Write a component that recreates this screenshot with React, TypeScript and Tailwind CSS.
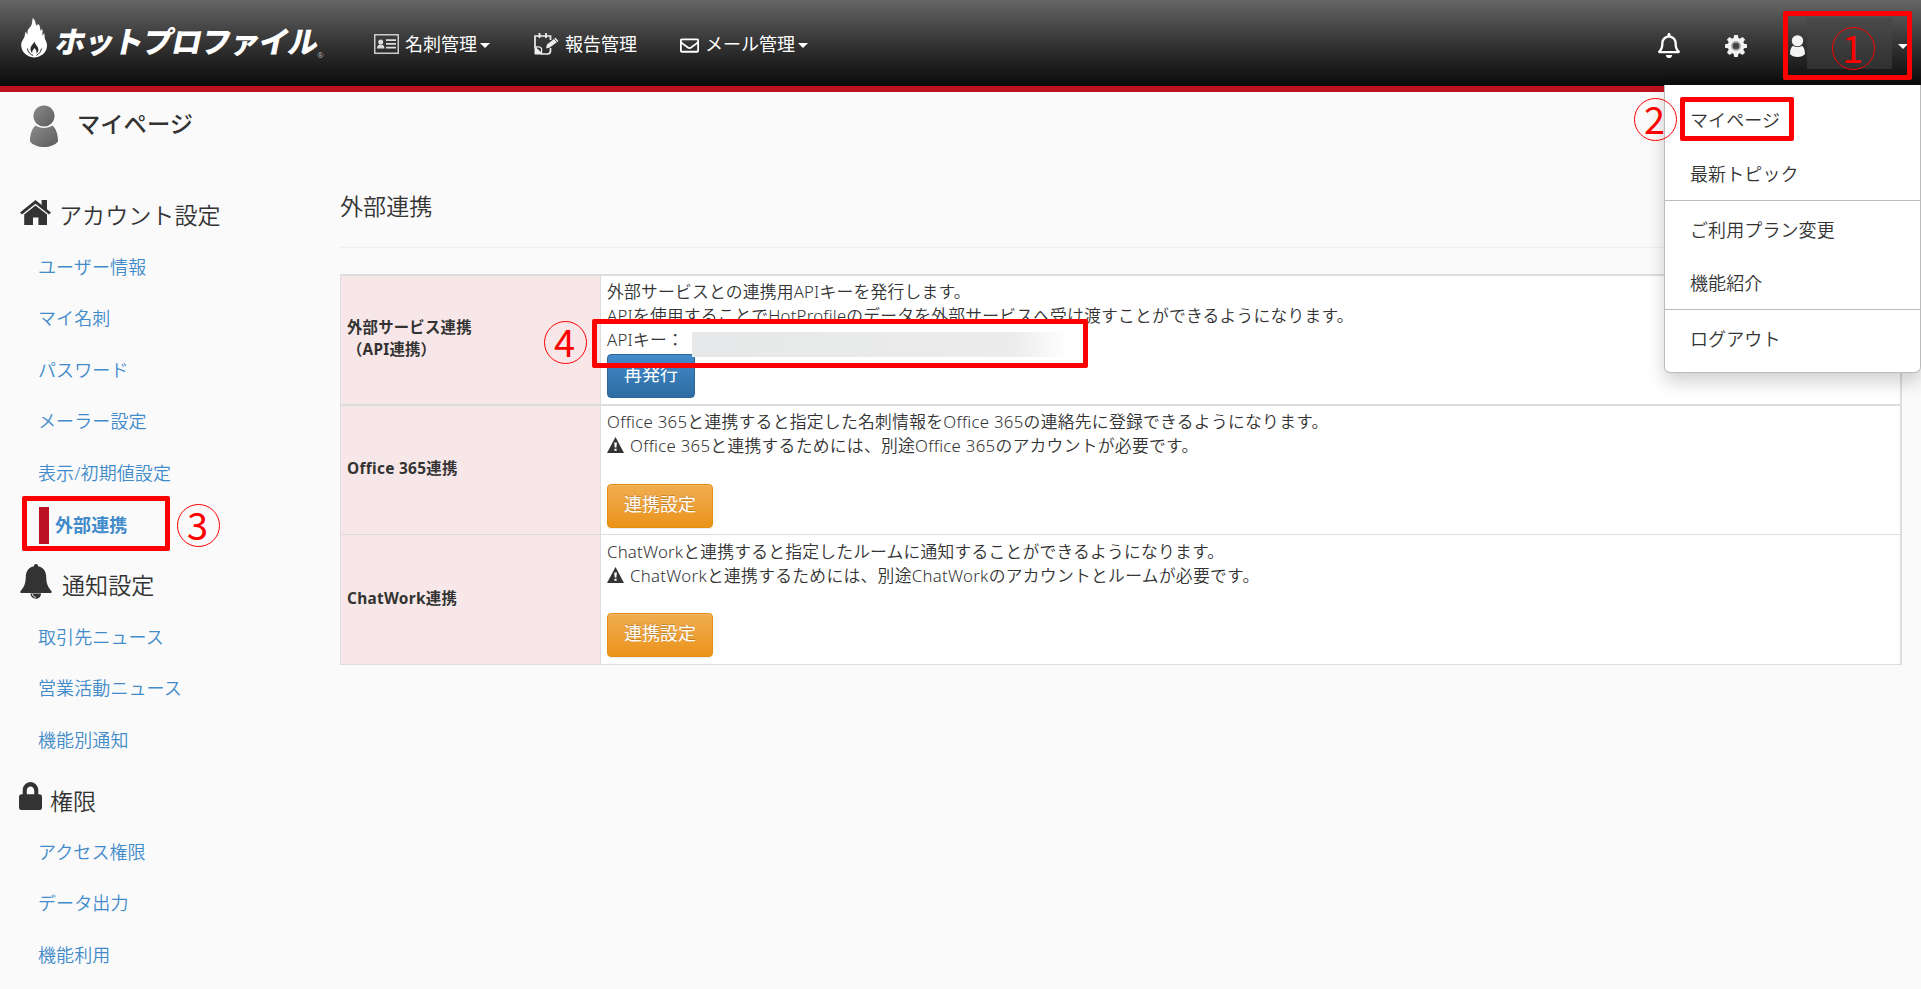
import type { ReactNode } from "react";
import { FaRegBell, FaRegEnvelope, FaLock } from "react-icons/fa";

const sections = [
  {
    title: "アカウント設定",
    icon: <HomeIcon />,
    gap: "gap-[8px]",
    items: ["ユーザー情報", "マイ名刺", "パスワード", "メーラー設定", "表示/初期値設定", "外部連携"],
  },
  {
    title: "通知設定",
    icon: <BellIcon />,
    gap: "gap-[10px]",
    items: ["取引先ニュース", "営業活動ニュース", "機能別通知"],
  },
  {
    title: "権限",
    icon: <FaLock className="-mt-[10px] -ml-[1px] h-[28px] w-[23px]" preserveAspectRatio="none" />,
    gap: "gap-[8px]",
    items: ["アクセス権限", "データ出力", "機能利用"],
  },
];

function HomeIcon() {
  return (
    <svg viewBox="0 0 31 25" className="-mt-[7px] h-[25px] w-[31px]" fill="currentColor">
      <path d="M15.500 0 0 12.400l2 2.200L15.500 3.800 29 14.600l2-2.200-4-3.200V0h-5.400v4.900z" />
      <path d="M15.500 5.600 4.200 14.600V25H13v-7.400h5.400V25H27V14.600z" />
    </svg>
  );
}

function BellIcon() {
  return (
    <svg viewBox="0 0 32 35" className="-mt-[8px] h-[35px] w-[32px]" fill="currentColor">
      <path d="M16 0c1.300 0 2 .9 2 2.200C23.300 3.200 26 7 26.200 12.500c.2 6.500 1 9.500 5 14.200.8 1 .8 2.300-.4 2.300H1.200C0 29 0 27.700.8 26.700c4-4.700 4.800-7.700 5-14.200C6 7 8.700 3.200 14 2.200 14 .9 14.700 0 16 0z" />
      <path d="M10.500 29.500h10.600c0 3-2.100 5-4.800 5.200-3.200.2-5.800-2.200-5.800-5.200z" />
      <path d="M12.500 30c.2 1.900 1.300 3 3.300 3.300" stroke="#fafafa" strokeWidth="1" fill="none" />
    </svg>
  );
}

function WarningIcon() {
  return (
    <svg viewBox="0 0 17 16" className="mr-[6px] inline-block h-[16px] w-[17px] align-[-1px]" fill="currentColor">
      <path fillRule="evenodd" d="M8.500 0 17 16H0zM7.200 5.500l.5 5h1.700l.5-5zM7.400 11.800v2h2.200v-2z" />
    </svg>
  );
}

function FlameLogo() {
  return (
    <svg viewBox="0 0 26 40" className="h-[40px] w-[26px]" fill="#fff">
      <path d="M11.800 0c-.8 3.500-.4 5.300-1.900 8.100-1 1.900-3.100 3.200-3.400 5.200-.2 1.300.2 2.200 0 3.300C5.700 15.800 5.200 14.700 5 13.500c-1.300 1.800-.9 3.500-1.500 5.200C2.600 21 .1 23.200.2 27.500.4 34 5.600 38.600 12.700 39.500 20.500 39.200 26 34.200 26 27.500c0-3.400-1.600-5.200-2.200-7.600-.4-1.700 0-3-.6-4.800-.5 1-.9 1.900-1.700 2.500-.4-2.300.9-4.600-.6-7.100-.2 1.100-.6 1.800-1.300 2.300-.6-3.300-.1-5.100-2.800-7.100-.2 1-.4 1.500-1 2C14.200 6.500 15 2.300 11.800 0z" />
      <path d="M13.400 22.800c.3 2.500-3.800 4.400-3.900 8.200 0 2 .7 3 1.700 4.300-.5-2.200 1-3.400 2.200-5.400 1.400 1.600 2.900 3.400 1.900 5.600 1.800-1.200 2.300-2.700 2-4.700-.4-2.900-3.900-4.600-3.900-8z" fill="#2b2b2b" />
      <path d="M6.400 30.500c.5 4 3.300 6 5.600 7M20.500 30.500c-.6 3.500-2.700 5.600-5 6.800" stroke="#2b2b2b" strokeWidth="1" fill="none" />
    </svg>
  );
}

function CardIcon() {
  return (
    <svg viewBox="0 0 25 20" className="h-[20px] w-[25px]" fill="#ddd">
      <rect x=".75" y=".75" width="23.500" height="18.500" fill="none" stroke="#ccc" strokeWidth="1.500" />
      <circle cx="6.700" cy="8" r="2.500" />
      <path d="M3 14.500c0-2.500 1.400-4 3.700-4s3.800 1.500 3.800 4zM12 5.300h10v1.800H12zM12 9h10v1.800H12zM12 12.700h10v1.800H12z" />
    </svg>
  );
}

function ReportIcon() {
  return (
    <svg viewBox="0 0 25 22" className="h-[22px] w-[25px]" fill="none" stroke="#eee">
      <path d="M16.500 15v2.500c0 2.200-.9 3.500-3 3.500H8L1 14.500V3h15.500v4" strokeWidth="1.700" />
      <path d="M5.500 0v5M12 0v5" strokeWidth="1.800" />
      <path d="M1 14.500 8 21H1z" fill="#eee" />
      <path d="M2 14c3-.5 5 0 5.500 1.500.3 1.500-.5 3.500.5 5" strokeWidth="1.300" />
      <path d="m12 15.500 1-4 8.500-6.800 3 3.300-8.700 6.600z" fill="#eee" stroke="none" />
      <path d="m20 5.800 3 3.200" stroke="#333" strokeWidth=".8" />
    </svg>
  );
}

function GearIcon() {
  return (
    <svg viewBox="-11 -11 22 22" className="h-[22px] w-[22px]" fill="#f2f2f2">
      {[0, 45, 90, 135].map((deg) => (
        <path key={deg} transform={`rotate(${deg})`} d="M-1.800-11h3.600l.8 4h-5.200zM-1.800 11h3.600l.8-4h-5.200z" />
      ))}
      <circle r="8.300" />
      <circle r="4.900" fill="#aaa" />
      <circle r="3.300" fill="#444" />
    </svg>
  );
}

function PersonIcon({ className, fill }: { className: string; fill: string }) {
  return (
    <svg viewBox="0 0 28 42" className={className} preserveAspectRatio="none" fill={fill}>
      <defs>
        <linearGradient id="person" x1="0" y1="0" x2="1" y2="1">
          <stop offset="0" stopColor="#8a8a8a" />
          <stop offset="1" stopColor="#5c5c5c" />
        </linearGradient>
      </defs>
      <circle cx="14" cy="11" r="10.600" />
      <path d="M5.500 20.500c4.500 3.300 12.500 3.300 17 0C26.500 24 28 30 28 36.500c-3 3.600-8 5.500-14 5.500S3 40.100 0 36.500C0 30 1.500 24 5.500 20.500z" />
    </svg>
  );
}

function Caret() {
  return <span className="inline-block border-x-[5px] border-t-[5px] border-x-transparent border-t-white" />;
}

function Step({ n, className }: { n: number; className: string }) {
  return (
    <div className={`absolute z-30 flex size-[43px] items-center justify-center rounded-full border-[1.5px] border-[#f00] font-['Noto_Sans_CJK_JP',sans-serif] text-[38px] leading-none font-normal text-[#f00] ${className}`}>
      <span className="-mt-[4px] -ml-[2px]">{n}</span>
    </div>
  );
}

function Frame({ className }: { className: string }) {
  return <div className={`absolute z-20 rounded-[2px] border-[5px] border-[#f00] ${className}`} />;
}

function NavItem({ icon, label, caret, className }: { icon: ReactNode; label: string; caret?: boolean; className: string }) {
  return (
    <a href="#" className={`flex items-center text-[18px] font-normal whitespace-nowrap text-white ${className}`}>
      {icon}
      <span>{label}</span>
      {caret && <span className="mt-[3px] flex"><Caret /></span>}
    </a>
  );
}

function Header() {
  return (
    <header className="flex h-[92px] items-start border-b-[6px] border-[#bf1220] bg-linear-to-b from-[#666] to-[#0b0b0b]">
      <div className="flex w-[353px] pt-[18px] pl-[21px]">
        <FlameLogo />
        <span className="ml-[9px] origin-left -skew-x-12 text-[30px] leading-[48px] font-black tracking-[-0.9px] whitespace-nowrap text-white">ホットプロファイル</span>
        <span className="mt-[32px] -ml-[1px] text-[8px] leading-[10px] text-[#ccc]">®</span>
      </div>
      <nav className="flex h-[88px] flex-1 items-center pl-[21px]">
        <NavItem className="gap-[6px] [&>span:last-child]:-ml-[3px]" icon={<CardIcon />} label="名刺管理" caret />
        <NavItem className="ml-[44px] gap-[6px]" icon={<ReportIcon />} label="報告管理" />
        <NavItem className="ml-[43px] gap-[6px] [&>span:last-child]:-ml-[3px]" icon={<FaRegEnvelope className="mt-[2px] size-[19px]" />} label="メール管理" caret />
      </nav>
      <div className="flex h-[92px] items-center pr-[13px] text-white">
        <FaRegBell className="-mt-[1px] h-[25px] w-[22px]" />
        <span className="ml-[45px]"><GearIcon /></span>
        <PersonIcon className="ml-[43px] h-[22px] w-[15px]" fill="#f4f4f4" />
        <span className="mt-[18px] mr-[6px] ml-[2px] h-[51px] w-[85px] self-start bg-linear-to-b from-[#4a4a4a] to-[#303030]" />
        <Caret />
      </div>
    </header>
  );
}

function MenuItem({ className, children }: { className: string; children: ReactNode }) {
  return <a href="#" className={`flex items-center pl-[25px] ${className}`}>{children}</a>;
}

function UserMenu() {
  return (
    <div className="absolute top-[85px] right-0 z-10 h-[288px] w-[257px] rounded-b-[6px] border border-t-0 border-[#bbb] bg-white pt-[8px] text-[18px] tracking-[0.1px] text-[#333] shadow-[0_9px_18px_rgba(0,0,0,0.18)]">
      <MenuItem className="h-[54px]">マイページ</MenuItem>
      <MenuItem className="h-[53px] pt-[1px]">最新トピック</MenuItem>
      <div className="mb-[2px] h-px bg-[#bbb]" />
      <MenuItem className="h-[54px]">ご利用プラン変更</MenuItem>
      <MenuItem className="h-[52px] pt-[1px]">機能紹介</MenuItem>
      <div className="mb-[2px] h-px bg-[#bbb]" />
      <MenuItem className="h-[54px]">ログアウト</MenuItem>
    </div>
  );
}

function Sidebar() {
  return (
    <aside className="w-[340px] pt-[8px] pl-[20px]">
      {sections.map((section) => (
        <section key={section.title}>
          <h2 className={`flex h-[60.4px] items-center pt-[9px] text-[23.1px] ${section.gap}`}>
            {section.icon}
            {section.title}
          </h2>
          <ul className="pl-[18px] text-[18px] tracking-[0.1px] text-[#428bca]">
            {section.items.map((item) => (
              <li key={item} className="flex h-[51.6px] items-center">
                {item === "外部連携" ? (
                  <a href="#" className="ml-[1px] flex h-[37px] items-center border-l-[10px] border-[#bb1122] pl-[6px] font-bold">{item}</a>
                ) : (
                  <a href="#">{item}</a>
                )}
              </li>
            ))}
          </ul>
        </section>
      ))}
    </aside>
  );
}

function OrangeButton() {
  return (
    <button className="flex h-[44px] w-[106px] items-center justify-center rounded-[4px] border border-[#e38d13] bg-linear-to-b from-[#f0ad4e] to-[#eb9316] pb-[4px] text-[18px] font-normal tracking-normal text-white shadow-[inset_0_1px_0_rgba(255,255,255,0.15),0_1px_1px_rgba(0,0,0,0.075)] [text-shadow:0_-1px_0_rgba(0,0,0,0.2)]">
      連携設定
    </button>
  );
}

function Th({ children }: { children: ReactNode }) {
  return <div className="flex w-[260px] items-center border-r border-[#ddd] bg-[#f7e7e8] pb-[2px] pl-[6px] text-[15.4px] leading-[22px] font-bold">{children}</div>;
}

function ServiceTable() {
  return (
    <div className="mt-[26px] w-[1562px] border-t-2 border-r-2 border-b border-l border-[#ddd] bg-white text-[16.8px] leading-[24px] tracking-[0.2px]">
      <div className="flex h-[130px] border-b-2 border-[#ddd]">
        <Th>
          <p>外部サービス連携<br />（API連携）</p>
        </Th>
        <div className="pt-[4px] pl-[6px]">
          <p>外部サービスとの連携用APIキーを発行します。</p>
          <p>APIを使用することでHotProfileのデータを外部サービスへ受け渡すことができるようになります。</p>
          <div className="relative flex">
            APIキー：
            <span className="absolute top-[4px] left-[85px] h-[25px] w-[376px] bg-linear-to-r from-[#e6e8e9] via-[#ececec] via-85% to-white" />
          </div>
          <button className="mt-[2px] flex h-[44px] w-[88px] items-center justify-center rounded-[4px] border border-[#2b669a] bg-linear-to-b from-[#428bca] to-[#2d6ca2] pb-[4px] text-[18px] font-normal tracking-normal text-white">
            再発行
          </button>
        </div>
      </div>
      <div className="flex h-[129px] border-b border-[#ddd]">
        <Th><span className="tracking-[0.3px]">Office 365連携</span></Th>
        <div className="pt-[4px] pl-[6px]">
          <p className="tracking-[0.28px]">Office 365と連携すると指定した名刺情報をOffice 365の連絡先に登録できるようになります。</p>
          <p className="mb-[26px] tracking-[0.28px]"><WarningIcon />Office 365と連携するためには、別途Office 365のアカウントが必要です。</p>
          <OrangeButton />
        </div>
      </div>
      <div className="flex h-[129px]">
        <Th><span className="tracking-[0.3px]">ChatWork連携</span></Th>
        <div className="pt-[5px] pl-[6px]">
          <p>ChatWorkと連携すると指定したルームに通知することができるようになります。</p>
          <p className="mb-[25px] tracking-[0.28px]"><WarningIcon />ChatWorkと連携するためには、別途ChatWorkのアカウントとルームが必要です。</p>
          <OrangeButton />
        </div>
      </div>
    </div>
  );
}

export default function App() {
  return (
    <div className="relative h-[989px] w-[1921px] overflow-hidden bg-[#fafafa] font-['Noto_Sans','Noto_Sans_CJK_JP',sans-serif] font-[350] text-[#333]">
      <Header />
      <div className="flex h-[81px] items-start pt-[13px] pl-[30px]">
        <PersonIcon className="h-[42px] w-[28px]" fill="url(#person)" />
        <h1 className="ml-[19px] text-[23.3px] leading-[39px] font-medium">マイページ</h1>
      </div>
      <div className="flex">
        <Sidebar />
        <main>
          <h2 className="flex h-[75px] items-center border-b border-[#eee] pb-[7px] text-[23.1px]">外部連携</h2>
          <ServiceTable />
        </main>
      </div>
      <UserMenu />

      <Frame className="top-[11px] left-[1783px] h-[69px] w-[129px]" />
      <Step n={1} className="top-[27px] left-[1832px]" />
      <Frame className="top-[97px] left-[1680px] h-[44px] w-[114px]" />
      <Step n={2} className="top-[98px] left-[1634px]" />
      <Frame className="top-[496px] left-[22px] h-[55px] w-[148px]" />
      <Step n={3} className="top-[504px] left-[177px]" />
      <Frame className="top-[319px] left-[592px] h-[49px] w-[496px]" />
      <Step n={4} className="top-[321px] left-[544px]" />
    </div>
  );
}
